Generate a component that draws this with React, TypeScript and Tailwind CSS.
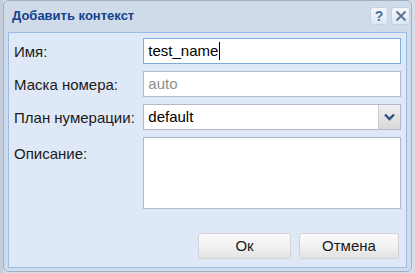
import React from "react";

const font = { fontFamily: '"Liberation Sans", Arial, sans-serif' };

export default function App() {
  return (
    <div className="w-[415px] h-[273px] bg-[#d7dee8] flex overflow-hidden" style={font}>
      <div className="w-[3px] shrink-0 bg-[#c3ccd8]" />
      <div className="w-[409px] h-[272px] rounded-[5px] border border-[#9fb0c6] bg-[#cfdbe9] flex flex-col">
        <div className="h-[30px] shrink-0 flex items-center pl-[8px] pr-[1px]">
          <div className="flex-1 text-[13px] font-bold text-[#15428b]">Добавить контекст</div>
          <div className="flex gap-[3px] items-center">
            <div className="w-[18px] h-[18px] rounded-[3px] border border-[#c4d2e4] bg-gradient-to-b from-[#f3f7fb] to-[#dde7f2] flex items-center justify-center text-[14px] font-bold text-[#4c6f9e] leading-none">?</div>
            <div className="w-[19px] h-[18px] rounded-[3px] border border-[#c4d2e4] bg-gradient-to-b from-[#f3f7fb] to-[#dde7f2] flex items-center justify-center">
              <svg width="12" height="12" viewBox="0 0 12 12">
                <path d="M1.5 1.5 L10.5 10.5 M10.5 1.5 L1.5 10.5" stroke="#5a6f96" strokeWidth="1.8" />
              </svg>
            </div>
          </div>
        </div>
        <div className="mx-[4px] mt-[1px] h-[236px] border border-[#99bbe8] bg-[#dfe8f6] flex flex-col px-[5px] pt-[5px]">
          <div className="flex flex-col gap-[7px] text-[15px] leading-[20px]">
            <div className="flex h-[26px]">
              <div className="w-[131px] pt-[4px] text-[#1a1a1a]">Имя:</div>
              <div className="w-[261px] border border-[#7eadd9] bg-white flex items-center pl-[4px] text-black">
                test_name<span className="inline-block w-px h-[18px] bg-black ml-[1px]" />
              </div>
            </div>
            <div className="flex h-[26px]">
              <div className="w-[131px] pt-[4px] text-[#1a1a1a]">Маска номера:</div>
              <div className="w-[261px] border border-[#b5b8c8] bg-white flex items-center pl-[4px] text-[#8e8e8e]">auto</div>
            </div>
            <div className="flex h-[26px]">
              <div className="w-[131px] pt-[4px] text-[#1a1a1a]">План нумерации:</div>
              <div className="w-[261px] border border-[#b5b8c8] bg-white flex items-center">
                <div className="flex-1 pl-[4px] text-black">default</div>
                <div className="w-[22px] h-full border-l border-[#c9ccd4] bg-gradient-to-b from-[#f0f0f0] to-[#d8d8d8] flex items-center justify-center">
                  <svg width="11" height="8" viewBox="0 0 11 8">
                    <path d="M1 1.5 L5.5 6 L10 1.5" stroke="#2f4f88" strokeWidth="2.4" fill="none" />
                  </svg>
                </div>
              </div>
            </div>
            <div className="flex h-[72px]">
              <div className="w-[131px] pt-[7px] text-[#1a1a1a]">Описание:</div>
              <div className="w-[261px] border border-[#b5b8c8] bg-white" />
            </div>
          </div>
          <div className="flex justify-end gap-[8px] mt-[24px] pr-[2px]">
            <div className="w-[93px] h-[26px] rounded-[3px] border border-[#d4d4d4] bg-gradient-to-b from-[#fafafa] via-[#f2f2f2] to-[#e2e2e2] flex items-center justify-center text-[15px] text-[#1a1a1a]">Ок</div>
            <div className="w-[100px] h-[26px] rounded-[3px] border border-[#d4d4d4] bg-gradient-to-b from-[#fafafa] via-[#f2f2f2] to-[#e2e2e2] flex items-center justify-center text-[15px] text-[#1a1a1a]">Отмена</div>
          </div>
        </div>
      </div>
    </div>
  );
}
